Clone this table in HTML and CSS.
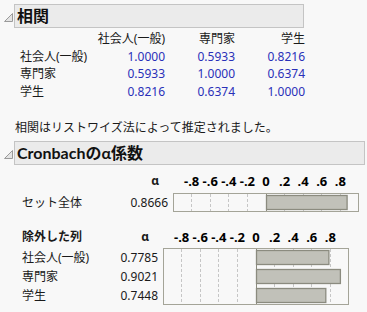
FILE: index.html
```html
<!DOCTYPE html>
<html lang="ja">
<head>
<meta charset="utf-8">
<title>相関</title>
<link rel="stylesheet" href="styles.css">
</head>
<body>
<div class="report">
  <section class="outline">
    <div class="outline-head">
      <svg class="disclose" width="9" height="9" viewBox="0 0 9 9"><path d="M8.5 0.5 L8.5 8.5 L0.5 8.5 Z" fill="#e4e4e4" stroke="#9a9a9a" stroke-width="1"/></svg>
      <h2 class="title title-corr">相関</h2>
    </div>
    <div class="corr-grid">
      <span></span>
      <span class="col-head">社会人(一般)</span>
      <span class="col-head">専門家</span>
      <span class="col-head">学生</span>

      <span class="row-label">社会人(一般)</span>
      <span class="num">1.0000</span>
      <span class="num">0.5933</span>
      <span class="num">0.8216</span>

      <span class="row-label">専門家</span>
      <span class="num">0.5933</span>
      <span class="num">1.0000</span>
      <span class="num">0.6374</span>

      <span class="row-label">学生</span>
      <span class="num">0.8216</span>
      <span class="num">0.6374</span>
      <span class="num">1.0000</span>
    </div>
    <p class="note">相関はリストワイズ法によって推定されました。</p>
  </section>

  <section class="outline">
    <div class="outline-head">
      <svg class="disclose" width="9" height="9" viewBox="0 0 9 9"><path d="M8.5 0.5 L8.5 8.5 L0.5 8.5 Z" fill="#e4e4e4" stroke="#9a9a9a" stroke-width="1"/></svg>
      <h2 class="title title-alpha">Cronbachのα係数</h2>
    </div>

    <div class="alpha-table alpha-all">
      <span></span>
      <span class="alpha-head">α</span>
      <div class="axis">
        <span>-.8</span><span>-.6</span><span>-.4</span><span>-.2</span><span>0</span><span>.2</span><span>.4</span><span>.6</span><span>.8</span>
      </div>

      <span class="a-label">セット全体</span>
      <span class="a-num">0.8666</span>
      <svg class="chart" width="186" height="19" viewBox="0 0 186 19">
        <rect x="0.5" y="0.5" width="185" height="18" fill="#f8f8f8" stroke="#a4a498"/>
        <g stroke="#c6c6c6" stroke-dasharray="3 2">
          <line x1="18.5" y1="1" x2="18.5" y2="18"/><line x1="37.5" y1="1" x2="37.5" y2="18"/>
          <line x1="55.5" y1="1" x2="55.5" y2="18"/><line x1="74.5" y1="1" x2="74.5" y2="18"/>
          <line x1="111.5" y1="1" x2="111.5" y2="18"/><line x1="130.5" y1="1" x2="130.5" y2="18"/>
          <line x1="148.5" y1="1" x2="148.5" y2="18"/><line x1="167.5" y1="1" x2="167.5" y2="18"/>
        </g>
        <line x1="93.5" y1="1" x2="93.5" y2="18" stroke="#8b8b7f"/>
        <rect x="93.5" y="2.5" width="80.6" height="14" fill="#c1c1b9" stroke="#8b8b7f" stroke-width="1.3"/>
      </svg>
    </div>

    <div class="alpha-table alpha-drop">
      <span class="a-label a-strong">除外した列</span>
      <span class="alpha-head">α</span>
      <div class="axis">
        <span>-.8</span><span>-.6</span><span>-.4</span><span>-.2</span><span>0</span><span>.2</span><span>.4</span><span>.6</span><span>.8</span>
      </div>

      <div class="a-rows">
        <span class="a-label">社会人(一般)</span>
        <span class="a-num">0.7785</span>
        <span class="a-label">専門家</span>
        <span class="a-num">0.9021</span>
        <span class="a-label">学生</span>
        <span class="a-num">0.7448</span>
      </div>
      <svg class="chart" width="186" height="57" viewBox="0 0 186 57">
        <rect x="0.5" y="0.5" width="185" height="56" fill="#f8f8f8" stroke="#a4a498"/>
        <g stroke="#c6c6c6" stroke-dasharray="3 2">
          <line x1="18.5" y1="1" x2="18.5" y2="56"/><line x1="37.5" y1="1" x2="37.5" y2="56"/>
          <line x1="55.5" y1="1" x2="55.5" y2="56"/><line x1="74.5" y1="1" x2="74.5" y2="56"/>
          <line x1="111.5" y1="1" x2="111.5" y2="56"/><line x1="130.5" y1="1" x2="130.5" y2="56"/>
          <line x1="148.5" y1="1" x2="148.5" y2="56"/><line x1="167.5" y1="1" x2="167.5" y2="56"/>
        </g>
        <line x1="93.5" y1="1" x2="93.5" y2="56" stroke="#8b8b7f"/>
        <g fill="#c1c1b9" stroke="#8b8b7f" stroke-width="1.3">
          <rect x="93.5" y="2.5" width="72.4" height="14"/>
          <rect x="93.5" y="21.5" width="83.9" height="14"/>
          <rect x="93.5" y="40.5" width="69.3" height="14"/>
        </g>
      </svg>
    </div>
  </section>
</div>
</body>
</html>
```

FILE: styles.css
```css
html, body {
  margin: 0;
  padding: 0;
  background: #f8f8f8;
}

body {
  font-family: "Noto Sans", "Noto Sans CJK JP", sans-serif;
  font-size: 12px;
  color: #1a1a1a;
}

.report {
  display: flex;
  flex-direction: column;
  width: 367px;
}

/* Outline header: disclosure triangle + grey title bar */
.outline-head {
  display: flex;
  align-items: center;
  gap: 1px;
  padding-left: 4px;
}

.disclose {
  flex: none;
  margin-top: 2px;
}

.title {
  box-sizing: border-box;
  height: 24px;
  margin: 0;
  padding-left: 2px;
  display: flex;
  align-items: center;
  background: #ebebeb;
  border: 1px solid #c4c4c4;
  font-family: "Lato", "Noto Sans CJK JP", sans-serif;
  font-size: 16px;
  font-weight: bold;
  color: #111;
  line-height: 1;
}

.outline:first-child .outline-head { margin-top: 4px; }

.title-corr { width: 290px; }
.title-alpha { width: 351px; }

/* Correlation matrix */
.corr-grid {
  display: grid;
  grid-template-columns: 75px 70px 70px 70px;
  grid-auto-rows: 17.5px;
  margin: 2px 0 0 20px;
  line-height: 17.5px;
}

.col-head { text-align: right; white-space: nowrap; }
.row-label { white-space: nowrap; }
.num { text-align: right; color: #2a30b8; }

.note {
  margin: 19px 0 4px 15px;
  line-height: 18px;
  white-space: nowrap;
}

/* Cronbach alpha tables */
.alpha-table {
  display: grid;
  column-gap: 5px;
  padding-left: 22px;
  line-height: 18px;
}

.alpha-all {
  grid-template-columns: 91px 50px 186px;
  grid-template-rows: 18px 19px;
  row-gap: 3px;
  margin-top: 7px;
}

.alpha-drop {
  grid-template-columns: 81px 50px 186px;
  grid-template-rows: 18px 57px;
  row-gap: 2px;
  margin-top: 16px;
}

.alpha-head {
  text-align: right;
  padding-right: 9px;
  font-weight: bold;
}

.axis {
  display: flex;
  padding-left: 9.3px;
  font-size: 13px;
  font-weight: bold;
  color: #000;
}

.axis span {
  flex: none;
  width: 18.6px;
  text-align: center;
  white-space: nowrap;
}

.a-label { white-space: nowrap; line-height: 19px; }
.a-strong { font-weight: bold; line-height: 18px; }
.a-num { text-align: right; line-height: 19px; }

.a-rows {
  grid-column: 1 / 3;
  display: grid;
  grid-template-columns: 81px 50px;
  column-gap: 5px;
  grid-auto-rows: 19px;
}

.chart { display: block; }
```
